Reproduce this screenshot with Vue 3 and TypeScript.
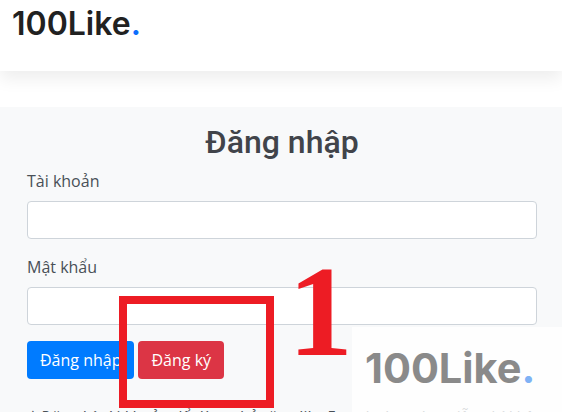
<script setup lang="ts">
const title = 'Đăng nhập'
</script>

<template>
  <div class="page">
    <header class="top">
      <div class="logo">100Like<span class="dot">.</span></div>
    </header>
    <main class="card">
      <h1 class="title">{{ title }}</h1>
      <label class="lab">Tài khoản</label>
      <div class="inp"></div>
      <label class="lab second">Mật khẩu</label>
      <div class="inp"></div>
      <div class="btns">
        <button class="btn blue">Đăng nhập</button>
        <button class="btn red">Đăng ký</button>
      </div>
      <p class="note"><em>* Đăng ký tài khoản để dùng thử tăng like Free, hoàn toàn miễn phí không mất tiền</em></p>
    </main>
    <div class="box"></div>
    <div class="one">1</div>
    <div class="wm">100Like<span class="wmdot">.</span></div>
  </div>
</template>

<style>
html, body { margin: 0; background: #fff; overflow: hidden; }
</style>

<style scoped>
.page { position: relative; width: 562px; height: 412px; overflow: hidden; background: #fff; font-family: "Open Sans", sans-serif; }
.top { height: 71px; box-sizing: border-box; padding: 2px 12px 0; background: #fff; box-shadow: 0 8px 16px rgba(0,0,0,.07); position: relative; }
.logo { font-family: Inter, sans-serif; font-weight: 600; font-size: 32px; line-height: 44px; color: #212121; }
.dot { color: #0d6efd; }
.card { margin-top: 36px; height: 320px; box-sizing: border-box; padding: 16px 25px 0 27px; background: #f8f9fa; }
.title { margin: 0 0 8px; text-align: center; font-family: Roboto, sans-serif; font-weight: 500; font-size: 32px; line-height: 38px; color: #41444a; }
.lab { display: block; font-size: 16px; line-height: 24px; color: #495057; margin-bottom: 8px; }
.second { margin-top: 16px; }
.inp { height: 38px; box-sizing: border-box; background: #fff; border: 1px solid #ced4da; border-radius: 4px; }
.btns { display: flex; gap: 4px; margin-top: 16px; }
.btn { height: 38px; padding: 0 13px; border: 0; border-radius: 4px; color: #fff; font-family: "Open Sans", sans-serif; font-size: 16px; }
.blue { background: #007bff; }
.red { background: #dc3545; }
.note { margin: 26px 0 0; white-space: nowrap; font-size: 16px; line-height: 24px; color: #495057; }
.box { position: absolute; left: 119px; top: 296px; width: 139px; height: 96px; border: 8px solid #ed1c24; }
.one { position: absolute; left: 288px; top: 241px; font-family: "Liberation Serif", serif; font-weight: 700; font-size: 130px; line-height: 140px; color: #ed1c24; }
.wm { position: absolute; left: 352px; top: 327px; width: 210px; height: 85px; box-sizing: border-box; padding: 13px 0 0 13px; background: rgba(255,255,255,.8); font-family: Inter, sans-serif; font-weight: 700; font-size: 41.5px; line-height: 56px; color: #8a8a8a; }
.wmdot { color: #7fb2f5; }
</style>
